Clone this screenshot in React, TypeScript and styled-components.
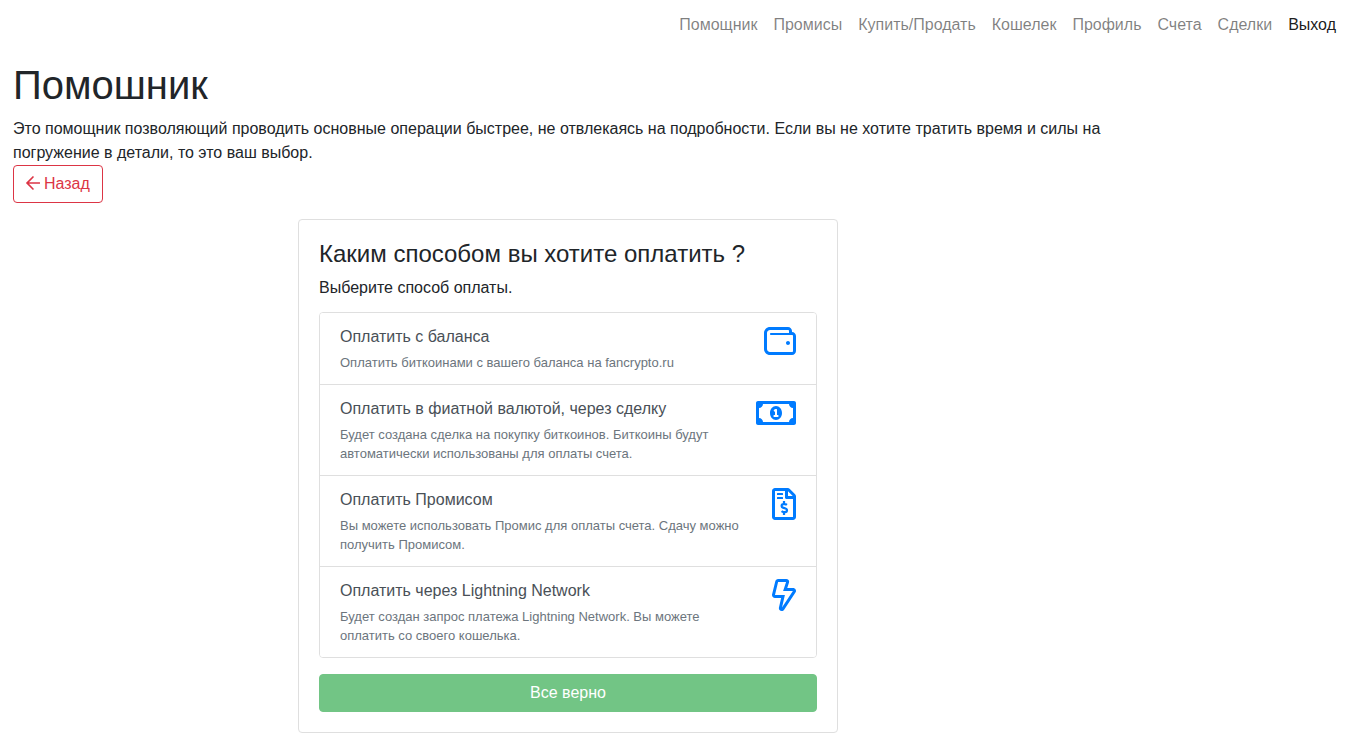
import React from "react";
import styled, { createGlobalStyle } from "styled-components";
import { FaRegMoneyBillAlt } from "react-icons/fa";

const GlobalStyle = createGlobalStyle`
  *, *::before, *::after { box-sizing: border-box; }
  body {
    margin: 0;
    background: #fff;
    color: #212529;
    font-family: "Liberation Sans", Arial, sans-serif;
    font-size: 16px;
    line-height: 24px;
  }
  button { font: inherit; margin: 0; }
`;

const Nav = styled.nav`
  display: flex;
  flex-wrap: wrap;
  justify-content: flex-end;
  padding: 5px 14px;
`;

const NavLink = styled.a<{ $active?: boolean }>`
  padding: 8px;
  color: ${(p) => (p.$active ? "rgba(0, 0, 0, 0.9)" : "rgba(0, 0, 0, 0.5)")};
  text-decoration: none;
`;

const Main = styled.main`
  max-width: 1136px;
  padding: 11px 13px;
`;

const PageTitle = styled.h1`
  margin: 0 0 8px;
  font-size: 40px;
  font-weight: 500;
  line-height: 48px;
`;

const Intro = styled.p`
  margin: 0;
`;

const BackButton = styled.button`
  display: block;
  padding: 6px 12px;
  border: 1px solid #dc3545;
  border-radius: 4px;
  background: transparent;
  color: #dc3545;
  cursor: pointer;

  svg { margin-right: 4px; vertical-align: -2px; }
`;

const Card = styled.section`
  max-width: 540px;
  margin: 16px auto 0;
  padding: 20px;
  border: 1px solid #dfdfdf;
  border-radius: 4px;
`;

const CardTitle = styled.h2`
  margin: 0 0 8px;
  font-size: 24px;
  font-weight: 500;
  line-height: 28px;
`;

const CardText = styled.p`
  margin: 0 0 12px;
`;

const Options = styled.div`
  margin-bottom: 16px;
  border: 1px solid #dfdfdf;
  border-radius: 4px;
  overflow: hidden;
`;

const Option = styled.button`
  display: flex;
  align-items: flex-start;
  gap: 16px;
  width: 100%;
  padding: 12px 20px;
  border: 0;
  background: #fff;
  color: #495057;
  text-align: left;
  cursor: pointer;

  & + & { border-top: 1px solid #dfdfdf; }
`;

const OptionBody = styled.span`
  display: flex;
  flex: 1;
  flex-direction: column;
  gap: 4px;
`;

const OptionTitle = styled.span`
  line-height: 24px;
`;

const OptionNote = styled.small`
  color: #6c757d;
  font-size: 13px;
  line-height: 19px;
`;

const OptionIcon = styled.span<{ $width: number }>`
  display: flex;
  justify-content: flex-end;
  width: 40px;
  color: #007bff;

  svg {
    display: block;
    flex: none;
    width: ${(p) => p.$width}px;
    height: 32px;
  }
`;

const ConfirmButton = styled.button`
  display: block;
  width: 100%;
  padding: 6px 12px;
  border: 1px solid #28a745;
  border-radius: 4px;
  background: #28a745;
  color: #fff;
  opacity: 0.65;
`;

const ArrowLeft = () => (
  <svg width="14" height="16" viewBox="0 0 448 512" fill="currentColor" aria-hidden="true">
    <path d="M229.9 473.9l19.8-19.8c4.7-4.7 4.7-12.3 0-17L94.6 282H436c6.6 0 12-5.4 12-12v-28c0-6.6-5.4-12-12-12H94.6L249.7 74.9c4.7-4.7 4.7-12.3 0-17L229.9 38.1c-4.7-4.7-12.3-4.7-17 0L3.5 247.5c-4.7 4.7-4.7 12.3 0 17l209.4 209.4c4.7 4.7 12.3 4.7 17 0z" />
  </svg>
);

const Wallet = () => (
  <svg viewBox="0 0 512 512" fill="currentColor" aria-hidden="true">
    <path d="M448 112V96c0-35.35-28.65-64-64-64H96C42.98 32 0 74.98 0 128v256c0 53.02 42.98 96 96 96h352c35.35 0 64-28.65 64-64V176c0-35.35-28.65-64-64-64zm16 304c0 8.82-7.18 16-16 16H96c-26.47 0-48-21.53-48-48V128c0-26.47 21.53-48 48-48h288c8.82 0 16 7.18 16 16v32H112c-8.84 0-16 7.16-16 16s7.16 16 16 16h336c8.82 0 16 7.18 16 16v240zM384 256c-17.67 0-32 14.33-32 32s14.33 32 32 32 32-14.33 32-32-14.33-32-32-32z" />
  </svg>
);

const Invoice = () => (
  <svg viewBox="0 0 384 512" fill="currentColor" aria-hidden="true">
    <path
      fillRule="evenodd"
      d="M369.9 98L286 14.1c-9-9-21.2-14.1-33.9-14.1H48C21.5 0 0 21.5 0 48v416c0 26.5 21.5 48 48 48h288c26.5 0 48-21.5 48-48V132c0-12.7-5.1-25-14.1-34zM256 51.9l76.1 76.1H256V51.9zM336 464H48V48h160v104c0 13.3 10.7 24 24 24h104v288z"
    />
    <rect x="80" y="80" width="96" height="32" rx="8" />
    <rect x="80" y="144" width="96" height="32" rx="8" />
    <path
      d="M192 208v36M192 396v36M239 270c-12-9-22-12-34-12h-22c-17 0-29 13-29 29 0 14 9 24 21 28l42 13c13 4 22 14 22 27 0 16-12 29-29 29h-22c-13 0-24-4-35-13"
      fill="none"
      stroke="currentColor"
      strokeWidth="36"
    />
  </svg>
);

const Bolt = () => (
  <svg viewBox="0 0 384 512" fill="currentColor" aria-hidden="true">
    <path d="M377.8 167.9c-8.2-14.3-23.1-22.9-39.6-22.9h-94.4l28.7-87.5c3.7-13.8.8-28.3-7.9-39.7C255.8 6.5 242.5 0 228.2 0H97.7C74.9 0 55.4 17.1 52.9 37.1L.5 249.3c-1.9 13.8 2.2 27.7 11.3 38.2C20.9 298 34.1 304 48 304h98.1l-34.9 151.7c-3.2 13.7-.1 27.9 8.6 38.9 8.7 11.1 21.8 17.4 35.9 17.4 16.3 0 31.5-8.8 38.8-21.6l183.2-276.7c8.4-14.3 8.4-31.5.1-45.8zM160.1 457.4L206.4 256H47.5L97.7 48l127.6-.9L177.5 193H334L160.1 457.4z" />
  </svg>
);

const links = ["Помощник", "Промисы", "Купить/Продать", "Кошелек", "Профиль", "Счета", "Сделки"];

const options = [
  {
    title: "Оплатить с баланса",
    note: "Оплатить биткоинами с вашего баланса на fancrypto.ru",
    icon: <Wallet />,
    iconWidth: 32,
  },
  {
    title: "Оплатить в фиатной валютой, через сделку",
    note: "Будет создана сделка на покупку биткоинов. Биткоины будут автоматически использованы для оплаты счета.",
    icon: <FaRegMoneyBillAlt aria-hidden="true" />,
    iconWidth: 40,
  },
  {
    title: "Оплатить Промисом",
    note: "Вы можете использовать Промис для оплаты счета. Сдачу можно получить Промисом.",
    icon: <Invoice />,
    iconWidth: 24,
  },
  {
    title: "Оплатить через Lightning Network",
    note: "Будет создан запрос платежа Lightning Network. Вы можете оплатить со своего кошелька.",
    icon: <Bolt />,
    iconWidth: 24,
  },
];

export default function App() {
  return (
    <>
      <GlobalStyle />
      <Nav>
        {links.map((label) => (
          <NavLink href="#" key={label}>{label}</NavLink>
        ))}
        <NavLink href="#" $active>Выход</NavLink>
      </Nav>
      <Main>
        <PageTitle>Помошник</PageTitle>
        <Intro>
          Это помощник позволяющий проводить основные операции быстрее, не отвлекаясь на подробности.
          Если вы не хотите тратить время и силы на погружение в детали, то это ваш выбор.
        </Intro>
        <BackButton type="button">
          <ArrowLeft />
          Назад
        </BackButton>
        <Card>
          <CardTitle>Каким способом вы хотите оплатить ?</CardTitle>
          <CardText>Выберите способ оплаты.</CardText>
          <Options>
            {options.map((option) => (
              <Option type="button" key={option.title}>
                <OptionBody>
                  <OptionTitle>{option.title}</OptionTitle>
                  <OptionNote>{option.note}</OptionNote>
                </OptionBody>
                <OptionIcon $width={option.iconWidth}>{option.icon}</OptionIcon>
              </Option>
            ))}
          </Options>
          <ConfirmButton type="button" disabled>Все верно</ConfirmButton>
        </Card>
      </Main>
    </>
  );
}
